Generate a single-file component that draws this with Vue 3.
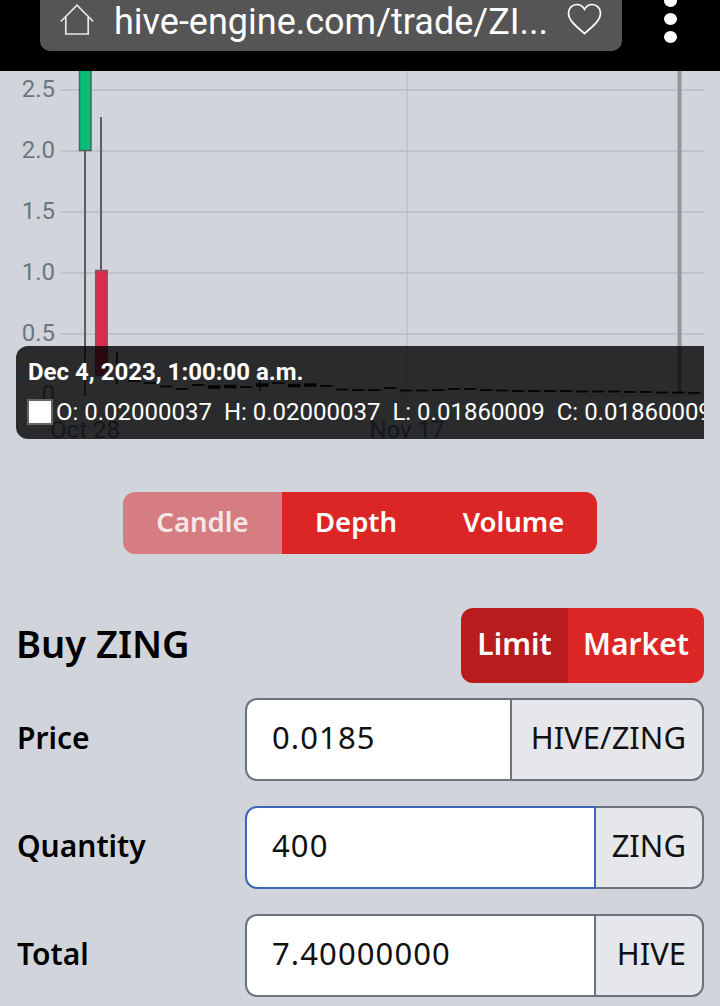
<script setup>
const yLabels = [
  { t: '2.5', y: 90 },
  { t: '2.0', y: 151 },
  { t: '1.5', y: 212 },
  { t: '1.0', y: 273 },
  { t: '0.5', y: 334 },
  { t: '0', y: 395 },
]
const dashYs = [
  381, 383, 386.5, 389, 385, 387, 386.5, 387, 385, 383, 385.5, 385, 386, 389.5, 390, 390, 388, 390.5, 390.5,
  390, 389, 389, 390, 390.5, 391, 391, 391, 391, 391.5, 391.5, 391.5, 392, 392, 392.5, 392.5, 393,
]
const thick = new Set([5, 6, 8, 10, 11])
const dashes = dashYs.map((y, i) => ({
  x: 128 + i * 16,
  y,
  w: thick.has(i) ? 3.5 : 1.8,
}))
const rows = [
  { label: 'Price', value: '0.0185', unit: 'HIVE/ZING', focused: false, wide: true },
  { label: 'Quantity', value: '400', unit: 'ZING', focused: true, wide: false },
  { label: 'Total', value: '7.40000000', unit: 'HIVE', focused: false, wide: false },
]
</script>

<template>
  <div class="page">
    <header class="topbar">
      <div class="urlbar">
        <svg class="home" width="34" height="31" viewBox="0 0 34 31" fill="none" stroke="#e8e8e8" stroke-width="1.7">
          <path d="M0.800 17.500 17 1.200l16.200 16.300M5.800 13v17h22.400V13" />
        </svg>
        <span class="url">hive-engine.com/trade/ZI...</span>
        <svg class="heart" width="35" height="32" viewBox="0 0 35 32" fill="none" stroke="#fff" stroke-width="1.7">
          <path d="M17.500 30.500C8 22.500 1.500 17 1.500 10c0-5 4-8.500 8.300-8.500 3.200 0 6 1.700 7.700 4.800 1.700-3.100 4.500-4.800 7.700-4.800 4.300 0 8.300 3.500 8.300 8.500 0 7-6.500 12.500-16 20.500Z" />
        </svg>
      </div>
      <div class="menu"><i></i><i></i><i></i></div>
    </header>

    <section class="chart">
      <svg class="plot" width="720" height="379" viewBox="0 71 720 379">
        <g v-for="l in yLabels" :key="l.t">
          <line x1="61" x2="704" :y1="l.y" :y2="l.y" stroke="#b9bcc0" stroke-width="1.500" />
          <text x="55" :y="l.y + 7" text-anchor="end" class="tick">{{ l.t }}</text>
        </g>
        <line x1="407" x2="407" y1="71" y2="398" stroke="#b9bcc0" stroke-width="1.200" />
        <line x1="679.500" x2="679.500" y1="71" y2="394" stroke="#939599" stroke-width="4" />
        <line x1="85" x2="85" y1="150" y2="396" stroke="#5c5e60" stroke-width="2" />
        <rect x="79.500" y="69" width="11.500" height="81.500" fill="#05bd78" stroke="#55605c" stroke-width="1.500" />
        <line x1="101" x2="101" y1="117" y2="271" stroke="#5c5e60" stroke-width="2" />
        <rect x="95.700" y="270.500" width="11.500" height="105" fill="#dc2a4c" stroke="#7a5a62" stroke-width="1.500" />
        <line x1="117" x2="117" y1="352" y2="384" stroke="#333" stroke-width="2" />
        <line x1="260" x2="260" y1="379" y2="391" stroke="#111" stroke-width="1.500" />
        <line v-for="(d, i) in dashes" :key="i" :x1="d.x" :x2="d.x + 12.500" :y1="d.y" :y2="d.y" stroke="#111" :stroke-width="d.w" />
        <text x="85" y="438" text-anchor="middle" class="date">Oct 28</text>
        <text x="407" y="438" text-anchor="middle" class="date">Nov 17</text>
      </svg>
      <div class="tooltip">
        <div class="tt-title">Dec 4, 2023, 1:00:00 a.m.</div>
        <div class="tt-body"><span class="swatch"></span><span class="ohlc">O: 0.02000037&nbsp; H: 0.02000037&nbsp; L: 0.01860009&nbsp; C: 0.01860009</span></div>
      </div>
    </section>

    <div class="tabs-wrap">
      <div class="tabs">
        <button class="tab candle">Candle</button>
        <button class="tab depth">Depth</button>
        <button class="tab volume">Volume</button>
      </div>
    </div>

    <div class="buy-head">
      <h2>Buy ZING</h2>
      <div class="switch">
        <button class="sw limit">Limit</button>
        <button class="sw market">Market</button>
      </div>
    </div>

    <div class="form">
      <div v-for="r in rows" :key="r.label" class="row">
        <label>{{ r.label }}</label>
        <div class="group">
          <div class="input" :class="{ focused: r.focused }"><span>{{ r.value }}</span></div>
          <div class="unit" :class="{ wide: r.wide }"><span>{{ r.unit }}</span></div>
        </div>
      </div>
    </div>
  </div>
</template>

<style>
html, body { margin: 0; background: #d1d5db; }
</style>

<style scoped>
.page {
  width: 720px;
  height: 1006px;
  overflow: hidden;
  background: #d1d5db;
  font-family: "Noto Sans", "Open Sans", sans-serif;
}
.topbar {
  height: 71px;
  background: #000;
  position: relative;
  box-sizing: border-box;
  padding-left: 40px;
  display: flex;
  align-items: flex-start;
}
.urlbar {
  width: 582px;
  height: 51px;
  background: #555;
  border-radius: 0 0 10px 10px;
  display: flex;
  align-items: flex-start;
  box-sizing: border-box;
  padding-left: 20px;
  position: relative;
}
.home { margin-top: 4px; flex: none; }
.url {
  font-family: Roboto, sans-serif;
  font-size: 36px;
  line-height: 44px;
  color: #fff;
  margin-left: 20px;
  white-space: nowrap;
}
.heart { position: absolute; right: 20px; top: 3px; }
.menu {
  margin-left: 42px;
  width: 14px;
  display: flex;
  flex-direction: column;
  gap: 6px;
  margin-top: -5px;
}
.menu i {
  display: block;
  width: 13px;
  height: 12px;
  border-radius: 50%;
  background: #fff;
}
.chart {
  position: relative;
  height: 379px;
}
.plot { display: block; }
.tick {
  font-family: Roboto, sans-serif;
  font-size: 24px;
  fill: #6b7680;
}
.date {
  font-family: Roboto, sans-serif;
  font-size: 24px;
  fill: #6b7680;
}
.tooltip {
  position: absolute;
  left: 16px;
  top: 275px;
  width: 688px;
  height: 93px;
  box-sizing: border-box;
  background: rgba(0, 0, 0, 0.8);
  border-radius: 12px 0 0 12px;
  overflow: hidden;
  padding: 12px 0 0 11px;
  color: #fff;
  font-family: Roboto, sans-serif;
  white-space: nowrap;
}
.tt-title {
  font-size: 24px;
  font-weight: 700;
  line-height: 28px;
  margin-left: 1px;
}
.tt-body {
  display: flex;
  align-items: center;
  margin-top: 13px;
  font-size: 24px;
  line-height: 26px;
}
.swatch {
  width: 26px;
  height: 26px;
  background: #fff;
  border: 2px solid #666;
  box-sizing: border-box;
  margin-right: 3px;
  flex: none;
}
.tabs-wrap {
  display: flex;
  justify-content: flex-start;
  padding: 42px 0 0 123px;
}
.tabs {
  display: flex;
  height: 62px;
  border-radius: 12px;
  overflow: hidden;
}
.tab, .sw {
  border: none;
  margin: 0;
  color: #fff;
  font-family: "Noto Sans", sans-serif;
  font-weight: 600;
  padding: 0 0 4px;
}
.tab { background: #dc2626; font-size: 27.500px; }
.candle { width: 159px; background: #d57d80; color: #f5e6e7; }
.depth { width: 148px; }
.volume { width: 167px; }
.buy-head {
  display: flex;
  justify-content: space-between;
  align-items: center;
  padding: 54px 16px 0 16px;
}
h2 {
  margin: 0 0 4px;
  font-size: 38px;
  font-weight: 600;
  color: #000;
  line-height: 71px;
}
.switch {
  display: flex;
  height: 75px;
  border-radius: 12px;
  overflow: hidden;
}
.sw { background: #dc2626; font-size: 30px; }
.limit { width: 107px; background: #b91c1c; }
.market { width: 136px; }
.form {
  padding: 15px 16px 0 17px;
  display: flex;
  flex-direction: column;
  gap: 25px;
}
.row {
  display: flex;
  align-items: center;
  height: 83px;
}
label {
  width: 228px;
  font-size: 30px;
  font-weight: 600;
  color: #000;
  flex: none;
  padding-bottom: 5px;
}
.group {
  flex: 1;
  display: flex;
  height: 83px;
  font-size: 31px;
  color: #111;
}
.input {
  flex: 1;
  box-sizing: border-box;
  background: #fff;
  display: flex;
  align-items: center;
  padding: 0 0 6px 25px;
  letter-spacing: 1.100px;
  border: 2px solid #6b7280;
  border-right: none;
  border-radius: 12px 0 0 12px;
}
.input.focused {
  border: 2px solid #3b66b8;
}
.unit {
  width: 110px;
  box-sizing: border-box;
  flex: none;
  background: #e5e7eb;
  border: 2px solid #6b7280;
  border-radius: 0 12px 12px 0;
  display: flex;
  align-items: center;
  justify-content: flex-end;
  padding: 0 16px 6px 0;
}
.unit.wide { width: 194px; }
.input.focused + .unit { border-left: none; width: 108px; }
</style>
